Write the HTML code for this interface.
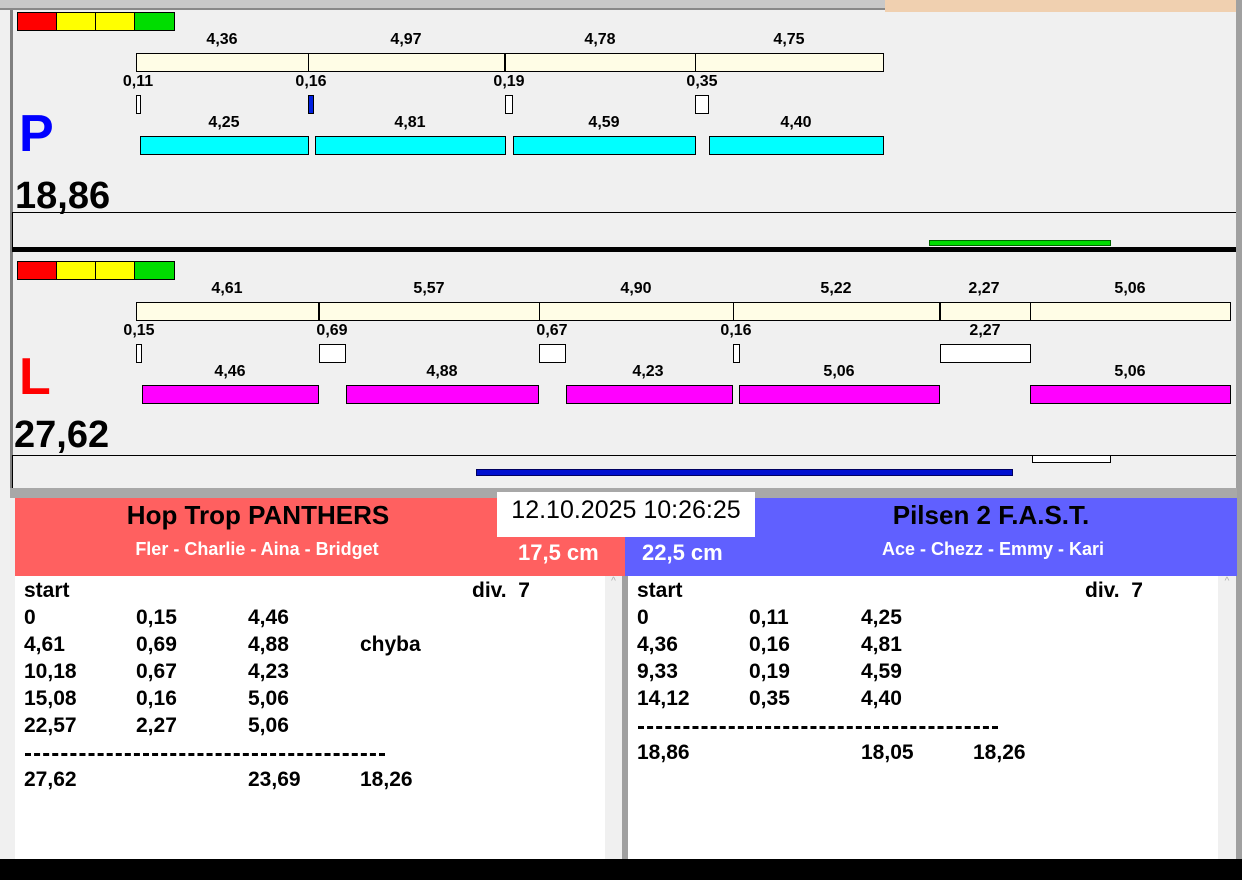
<!DOCTYPE html>
<html><head><meta charset="utf-8"><style>
*{margin:0;padding:0;box-sizing:border-box}
body{width:1242px;height:880px;position:relative;background:#f0f0f0;overflow:hidden;font-family:"Liberation Sans",Arial,sans-serif;font-weight:bold;color:#000}
div{position:absolute}
.t{font-size:16px;transform:translateX(-50%);white-space:nowrap;line-height:16px}
.bx{border:1px solid #000}
.r{font-size:21px;line-height:24px;white-space:nowrap}
</style></head><body>
<div style="left:0;top:0;width:885px;height:10px;background:#c8c8c8;border-bottom:2px solid #888"></div>
<div style="left:885px;top:0;width:352px;height:12px;background:#f0d0b0"></div>
<div style="left:1236px;top:0;width:6px;height:860px;background:#a0a0a0"></div>
<div style="left:10px;top:10px;width:3px;height:480px;background:#808080"></div>

<!-- panel P -->
<div class="bx" style="left:17px;top:12px;width:40px;height:19px;background:#f00"></div>
<div class="bx" style="left:56px;top:12px;width:40px;height:19px;background:#ff0"></div>
<div class="bx" style="left:95px;top:12px;width:40px;height:19px;background:#ff0"></div>
<div class="bx" style="left:134px;top:12px;width:41px;height:19px;background:#0d0"></div>
<div class="t" style="left:222px;top:32px">4,36</div>
<div class="t" style="left:406px;top:32px">4,97</div>
<div class="t" style="left:600px;top:32px">4,78</div>
<div class="t" style="left:789px;top:32px">4,75</div>
<div class="bx" style="left:136px;top:53px;width:748px;height:19px;background:#fffde6"></div>
<div style="left:308px;top:53px;width:1px;height:19px;background:#000"></div>
<div style="left:504px;top:53px;width:2px;height:19px;background:#000"></div>
<div style="left:695px;top:53px;width:1px;height:19px;background:#000"></div>
<div class="t" style="left:138px;top:74px">0,11</div>
<div class="t" style="left:311px;top:74px">0,16</div>
<div class="t" style="left:509px;top:74px">0,19</div>
<div class="t" style="left:702px;top:74px">0,35</div>
<div class="bx" style="left:136px;top:95px;width:5px;height:19px;background:#fff"></div>
<div class="bx" style="left:308px;top:95px;width:6px;height:19px;background:#0020e0"></div>
<div class="bx" style="left:505px;top:95px;width:8px;height:19px;background:#fff"></div>
<div class="bx" style="left:695px;top:95px;width:14px;height:19px;background:#fff"></div>
<div class="t" style="left:224px;top:115px">4,25</div>
<div class="t" style="left:410px;top:115px">4,81</div>
<div class="t" style="left:604px;top:115px">4,59</div>
<div class="t" style="left:796px;top:115px">4,40</div>
<div class="bx" style="left:140px;top:136px;width:169px;height:19px;background:#0ff"></div>
<div class="bx" style="left:315px;top:136px;width:191px;height:19px;background:#0ff"></div>
<div class="bx" style="left:513px;top:136px;width:183px;height:19px;background:#0ff"></div>
<div class="bx" style="left:709px;top:136px;width:175px;height:19px;background:#0ff"></div>
<div style="left:19px;top:104px;font-size:52px;color:#0000ff;line-height:60px">P</div>
<div style="left:15px;top:174px;font-size:38px;line-height:44px">18,86</div>
<div class="bx" style="left:12px;top:212px;width:1224px;height:36px;border-bottom:none;border-right:none"></div>
<div style="left:929px;top:240px;width:182px;height:6px;background:#0d0;border:1px solid #060"></div>
<div style="left:12px;top:247px;width:1224px;height:5px;background:#000"></div>

<!-- panel L -->
<div class="bx" style="left:17px;top:261px;width:40px;height:19px;background:#f00"></div>
<div class="bx" style="left:56px;top:261px;width:40px;height:19px;background:#ff0"></div>
<div class="bx" style="left:95px;top:261px;width:40px;height:19px;background:#ff0"></div>
<div class="bx" style="left:134px;top:261px;width:41px;height:19px;background:#0d0"></div>
<div class="t" style="left:227px;top:281px">4,61</div>
<div class="t" style="left:429px;top:281px">5,57</div>
<div class="t" style="left:636px;top:281px">4,90</div>
<div class="t" style="left:836px;top:281px">5,22</div>
<div class="t" style="left:984px;top:281px">2,27</div>
<div class="t" style="left:1130px;top:281px">5,06</div>
<div class="bx" style="left:136px;top:302px;width:1095px;height:19px;background:#fffde6"></div>
<div style="left:318px;top:302px;width:2px;height:19px;background:#000"></div>
<div style="left:539px;top:302px;width:1px;height:19px;background:#000"></div>
<div style="left:733px;top:302px;width:1px;height:19px;background:#000"></div>
<div style="left:939px;top:302px;width:2px;height:19px;background:#000"></div>
<div style="left:1030px;top:302px;width:1px;height:19px;background:#000"></div>
<div class="t" style="left:139px;top:323px">0,15</div>
<div class="t" style="left:332px;top:323px">0,69</div>
<div class="t" style="left:552px;top:323px">0,67</div>
<div class="t" style="left:736px;top:323px">0,16</div>
<div class="t" style="left:985px;top:323px">2,27</div>
<div class="bx" style="left:136px;top:344px;width:6px;height:19px;background:#fff"></div>
<div class="bx" style="left:319px;top:344px;width:27px;height:19px;background:#fff"></div>
<div class="bx" style="left:539px;top:344px;width:27px;height:19px;background:#fff"></div>
<div class="bx" style="left:733px;top:344px;width:7px;height:19px;background:#fff"></div>
<div class="bx" style="left:940px;top:344px;width:91px;height:19px;background:#fff"></div>
<div class="t" style="left:230px;top:364px">4,46</div>
<div class="t" style="left:442px;top:364px">4,88</div>
<div class="t" style="left:648px;top:364px">4,23</div>
<div class="t" style="left:839px;top:364px">5,06</div>
<div class="t" style="left:1130px;top:364px">5,06</div>
<div class="bx" style="left:142px;top:385px;width:177px;height:19px;background:#f0f"></div>
<div class="bx" style="left:346px;top:385px;width:193px;height:19px;background:#f0f"></div>
<div class="bx" style="left:566px;top:385px;width:167px;height:19px;background:#f0f"></div>
<div class="bx" style="left:739px;top:385px;width:201px;height:19px;background:#f0f"></div>
<div class="bx" style="left:1030px;top:385px;width:201px;height:19px;background:#f0f"></div>
<div style="left:19px;top:347px;font-size:52px;color:#f00;line-height:60px">L</div>
<div style="left:14px;top:413px;font-size:38px;line-height:44px">27,62</div>
<div class="bx" style="left:12px;top:455px;width:1224px;height:34px;border-bottom:none;border-right:none"></div>
<div class="bx" style="left:1032px;top:455px;width:79px;height:8px;background:#fff"></div>
<div style="left:476px;top:469px;width:537px;height:7px;background:#0010d0;border:1px solid #000060"></div>
<div style="left:10px;top:488px;width:1227px;height:10px;background:#a8a8a8"></div>

<!-- header -->
<div style="left:15px;top:498px;width:610px;height:78px;background:#ff6060"></div>
<div style="left:625px;top:498px;width:612px;height:78px;background:#6060ff"></div>
<div style="left:258px;top:500px;font-size:26px;line-height:30px;transform:translateX(-50%);white-space:nowrap">Hop Trop PANTHERS</div>
<div style="left:257px;top:539px;font-size:18px;color:#fff;transform:translateX(-50%);white-space:nowrap;line-height:20px">Fler - Charlie - Aina - Bridget</div>
<div style="left:518px;top:540px;font-size:22px;color:#fff;line-height:26px">17,5 cm</div>
<div style="left:642px;top:540px;font-size:22px;color:#fff;line-height:26px">22,5 cm</div>
<div style="left:991px;top:500px;font-size:26px;line-height:30px;transform:translateX(-50%);white-space:nowrap">Pilsen 2 F.A.S.T.</div>
<div style="left:993px;top:539px;font-size:18px;color:#fff;transform:translateX(-50%);white-space:nowrap;line-height:20px">Ace - Chezz - Emmy - Kari</div>
<div style="left:497px;top:492px;width:258px;height:45px;background:#fff;font-weight:normal;font-size:25px;line-height:36px;text-align:center">12.10.2025 10:26:25</div>

<!-- lists -->
<div style="left:15px;top:576px;width:590px;height:283px;background:#fff"></div>
<div style="left:605px;top:576px;width:17px;height:283px;background:#f0f0f0;color:#aaa;font-size:10px;text-align:center;font-weight:normal">^</div>
<div style="left:622px;top:576px;width:6px;height:283px;background:#a0a0a0"></div>
<div style="left:628px;top:576px;width:590px;height:283px;background:#fff"></div>
<div style="left:1218px;top:576px;width:18px;height:283px;background:#f0f0f0;color:#aaa;font-size:10px;text-align:center;font-weight:normal">^</div>

<div class="r" style="left:24px;top:579px">start</div><div class="r" style="left:472px;top:579px">div.&nbsp; 7</div>
<div class="r" style="left:24px;top:606px">0</div><div class="r" style="left:136px;top:606px">0,15</div><div class="r" style="left:248px;top:606px">4,46</div>
<div class="r" style="left:24px;top:633px">4,61</div><div class="r" style="left:136px;top:633px">0,69</div><div class="r" style="left:248px;top:633px">4,88</div><div class="r" style="left:360px;top:633px">chyba</div>
<div class="r" style="left:24px;top:660px">10,18</div><div class="r" style="left:136px;top:660px">0,67</div><div class="r" style="left:248px;top:660px">4,23</div>
<div class="r" style="left:24px;top:687px">15,08</div><div class="r" style="left:136px;top:687px">0,16</div><div class="r" style="left:248px;top:687px">5,06</div>
<div class="r" style="left:24px;top:714px">22,57</div><div class="r" style="left:136px;top:714px">2,27</div><div class="r" style="left:248px;top:714px">5,06</div>
<div style="left:25px;top:753px;width:360px;height:3px;border-top:3px dashed #000"></div>
<div class="r" style="left:24px;top:768px">27,62</div><div class="r" style="left:248px;top:768px">23,69</div><div class="r" style="left:360px;top:768px">18,26</div>

<div class="r" style="left:637px;top:579px">start</div><div class="r" style="left:1085px;top:579px">div.&nbsp; 7</div>
<div class="r" style="left:637px;top:606px">0</div><div class="r" style="left:749px;top:606px">0,11</div><div class="r" style="left:861px;top:606px">4,25</div>
<div class="r" style="left:637px;top:633px">4,36</div><div class="r" style="left:749px;top:633px">0,16</div><div class="r" style="left:861px;top:633px">4,81</div>
<div class="r" style="left:637px;top:660px">9,33</div><div class="r" style="left:749px;top:660px">0,19</div><div class="r" style="left:861px;top:660px">4,59</div>
<div class="r" style="left:637px;top:687px">14,12</div><div class="r" style="left:749px;top:687px">0,35</div><div class="r" style="left:861px;top:687px">4,40</div>
<div style="left:638px;top:726px;width:360px;height:3px;border-top:3px dashed #000"></div>
<div class="r" style="left:637px;top:741px">18,86</div><div class="r" style="left:861px;top:741px">18,05</div><div class="r" style="left:973px;top:741px">18,26</div>

<div style="left:0;top:859px;width:1242px;height:21px;background:#000"></div>
</body></html>
